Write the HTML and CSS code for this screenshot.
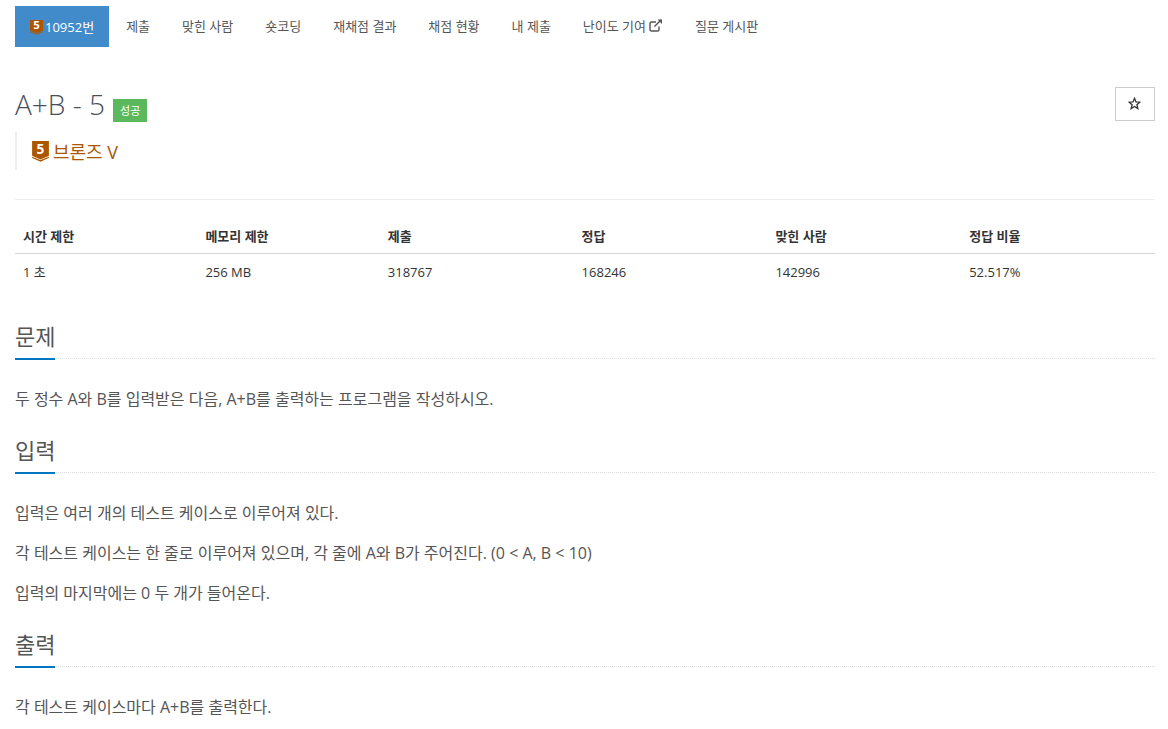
FILE: index.html
```html
<!DOCTYPE html>
<html lang="ko">
  <head>
    <meta charset="UTF-8" />
    <meta name="viewport" content="width=device-width, initial-scale=1.0" />
    <title>10952번: A+B - 5</title>
    <link rel="stylesheet" href="styles.css">
  </head>
  <body>
    <div class="container">
      <!-- 상단 메뉴 -->
      <ul class="nav-tabs">
        <li class="active">
          <a href="#">
            <svg class="tier tier-small" viewBox="0 0 16 20" preserveAspectRatio="none"><path class="tier-body" d="M0 0H16V14L8 17.5L0 14Z" /><path class="tier-line" d="M0 15.5L8 19L16 15.5" /><text class="tier-num" x="8" y="12.5">5</text></svg>
            10952번
          </a>
        </li>
        <li><a href="#">제출</a></li>
        <li><a href="#">맞힌 사람</a></li>
        <li><a href="#">숏코딩</a></li>
        <li><a href="#">재채점 결과</a></li>
        <li><a href="#">채점 현황</a></li>
        <li><a href="#">내 제출</a></li>
        <li>
          <a href="#">난이도 기여
            <svg class="ext-icon" viewBox="0 0 14 13"><path d="M10 7.5V10.5C10 11.4 9.4 12 8.5 12H2.5C1.6 12 1 11.4 1 10.5V4.5C1 3.6 1.6 3 2.5 3H7" /><path d="M5.5 7.5L12 1" /><path class="ext-tip" d="M8.5 0.5H13V5Z" /></svg>
          </a>
        </li>
        <li><a href="#">질문 게시판</a></li>
      </ul>

      <!-- 제목 -->
      <div class="problem-head">
        <div>
          <h1>A+B - 5 <span class="label-ok">성공</span></h1>
          <blockquote class="tier-quote">
            <svg class="tier tier-big" viewBox="0 0 16 20"><path class="tier-body" d="M0 0H16V14L8 17.5L0 14Z" /><path class="tier-line" d="M0 15.5L8 19L16 15.5" /><text class="tier-num" x="8" y="12">5</text></svg>
            <a href="#">브론즈 V</a>
          </blockquote>
        </div>
        <button class="star-btn">
          <svg class="star-icon" viewBox="0 0 14 14"><path d="M7 1.4L8.6 5.3L12.8 5.6L9.6 8.3L10.6 12.4L7 10.2L3.4 12.4L4.4 8.3L1.2 5.6L5.4 5.3Z" /></svg>
        </button>
      </div>

      <hr class="head-line" />

      <!-- 제한 정보 -->
      <table class="info-table">
        <colgroup>
          <col class="col-sm" />
          <col class="col-sm" />
          <col class="col-lg" />
          <col class="col-lg" />
          <col class="col-lg" />
          <col class="col-lg" />
        </colgroup>
        <thead>
          <tr>
            <th>시간 제한</th>
            <th>메모리 제한</th>
            <th>제출</th>
            <th>정답</th>
            <th>맞힌 사람</th>
            <th>정답 비율</th>
          </tr>
        </thead>
        <tbody>
          <tr>
            <td>1 초</td>
            <td>256 MB</td>
            <td>318767</td>
            <td>168246</td>
            <td>142996</td>
            <td>52.517%</td>
          </tr>
        </tbody>
      </table>

      <section class="block">
        <h2><span>문제</span></h2>
        <p>두 정수 A와 B를 입력받은 다음, A+B를 출력하는 프로그램을 작성하시오.</p>
      </section>

      <section class="block">
        <h2><span>입력</span></h2>
        <p>입력은 여러 개의 테스트 케이스로 이루어져 있다.</p>
        <p>각 테스트 케이스는 한 줄로 이루어져 있으며, 각 줄에 A와 B가 주어진다. (0 &lt; A, B &lt; 10)</p>
        <p>입력의 마지막에는 0 두 개가 들어온다.</p>
      </section>

      <section class="block">
        <h2><span>출력</span></h2>
        <p>각 테스트 케이스마다 A+B를 출력한다.</p>
      </section>
    </div>
  </body>
</html>
```

FILE: styles.css
```css
/* 기본 */
html {
  overflow: hidden;
}

body {
  font-family: 'Open Sans', 'Noto Sans CJK KR', sans-serif;
  background-color: #fff;
  color: #555;
  margin: 0;
  font-size: 13px;
}

a {
  color: inherit;
  text-decoration: none;
}

.container {
  padding: 6px 13px 0 15px;
}

/* 상단 메뉴 */
.nav-tabs {
  display: flex;
  list-style: none;
  margin: 0;
  padding: 0;
  height: 41px;
}

.nav-tabs a {
  display: flex;
  align-items: center;
  gap: 3px;
  box-sizing: border-box;
  height: 41px;
  padding: 0 16px 2px;
  color: #555;
}

.nav-tabs .active {
  margin-right: 1px;
}

.nav-tabs .active a {
  background-color: #428bca;
  color: #fff;
  padding: 0 15px 0 15px;
  gap: 2px;
}

.tier {
  display: block;
  flex: none;
  overflow: visible;
}

.tier-small {
  width: 13px;
  height: 15px;
  margin-top: 1px;
}

.tier-small .tier-num {
  font-size: 14px;
}

.tier-big {
  width: 17px;
  height: 21px;
}

.tier-body {
  fill: #ad5600;
}

.tier-line {
  fill: none;
  stroke: #ad5600;
  stroke-width: 1.2;
}

.tier-num {
  fill: #fff;
  font-family: 'Open Sans', sans-serif;
  font-size: 13px;
  font-weight: 700;
  text-anchor: middle;
}

.ext-icon {
  width: 14px;
  height: 13px;
  fill: none;
  stroke: #555;
  stroke-width: 1.4;
}

.ext-tip {
  fill: #555;
  stroke: none;
}

/* 제목 */
.problem-head {
  display: flex;
  justify-content: space-between;
  align-items: flex-start;
  margin-top: 39px;
}

h1 {
  margin: 0;
  font-size: 28px;
  font-weight: 300;
  line-height: 36px;
  color: #47505a;
}

.label-ok {
  display: inline-block;
  background-color: #5cb85c;
  color: #fff;
  font-size: 11px;
  font-weight: 400;
  line-height: 23px;
  width: 34px;
  text-align: center;
  vertical-align: 0;
  margin-left: 1px;
}

.tier-quote {
  display: flex;
  align-items: center;
  gap: 4px;
  margin: 10px 0 0;
  padding: 0 0 0 15px;
  height: 38px;
  border-left: 2px solid #eee;
  font-size: 18px;
  color: #ad5600;
}

.star-btn {
  display: flex;
  align-items: center;
  justify-content: center;
  width: 40px;
  height: 34px;
  margin-top: 1px;
  padding: 0 1px 1px 0;
  background: #fff;
  border: 1px solid #ccc;
}

.star-icon {
  width: 13px;
  height: 13px;
  fill: none;
  stroke: #333;
  stroke-width: 1.4;
}

.head-line {
  border: 0;
  border-top: 1px solid #eee;
  margin: 29px 0 0;
}

/* 제한 정보 */
.info-table {
  width: 100%;
  border-collapse: collapse;
  margin-top: 17px;
  color: #333;
}

.col-sm {
  width: 16%;
}

.col-lg {
  width: 17%;
}

.info-table th {
  text-align: left;
  font-weight: 700;
  padding: 8px;
  height: 20px;
  border-bottom: 1px solid #d5d5d5;
}

.info-table td {
  padding: 8px;
  height: 19px;
}

/* 본문 */
h2 {
  margin: 0;
  height: 40px;
  border-bottom: 1px dotted #ddd;
  font-size: 22px;
  font-weight: 400;
  line-height: 36px;
  color: #555;
}

.block:first-of-type {
  margin-top: 29px;
}

h2 span {
  display: inline-block;
  width: 40px;
  height: 40px;
  border-bottom: 2px solid #0076c0;
  white-space: nowrap;
}

.block p {
  margin: 0 0 20px;
  font-size: 16px;
  line-height: 20px;
  color: #555;
}

.block p:last-child {
  margin-bottom: 23px;
}

.block h2 + p {
  margin-top: 30px;
}
```
